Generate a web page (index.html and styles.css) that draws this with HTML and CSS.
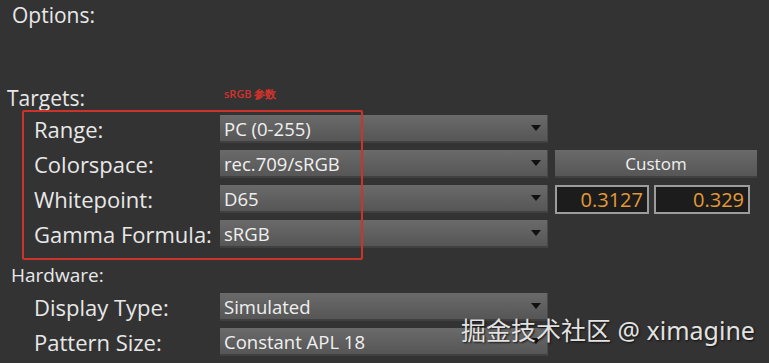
FILE: index.html
```html
<!DOCTYPE html>
<html>
<head>
<meta charset="utf-8">
<link rel="stylesheet" href="styles.css">
</head>
<body>
<div class="panel">
  <div class="title">Options:</div>
  <div class="section-head">
    <span class="section-title">Targets:</span>
    <span class="note">sRGB 参数</span>
  </div>
  <div class="group targets">
    <div class="row">
      <span class="label">Range:</span>
      <div class="select"><span>PC (0-255)</span><i class="caret"></i></div>
    </div>
    <div class="row">
      <span class="label">Colorspace:</span>
      <div class="select"><span>rec.709/sRGB</span><i class="caret"></i></div>
      <div class="button">Custom</div>
    </div>
    <div class="row">
      <span class="label">Whitepoint:</span>
      <div class="select"><span>D65</span><i class="caret"></i></div>
      <div class="inputs">
        <div class="field w1">0.3127</div>
        <div class="field w2">0.329</div>
      </div>
    </div>
    <div class="row">
      <span class="label">Gamma Formula:</span>
      <div class="select"><span>sRGB</span><i class="caret"></i></div>
    </div>
    <div class="highlight"></div>
  </div>
  <div class="section-head hw">
    <span class="section-title small">Hardware:</span>
  </div>
  <div class="group">
    <div class="row">
      <span class="label">Display Type:</span>
      <div class="select"><span>Simulated</span><i class="caret"></i></div>
    </div>
    <div class="row">
      <span class="label">Pattern Size:</span>
      <div class="select"><span>Constant APL 18</span><i class="caret"></i></div>
    </div>
  </div>
  <div class="watermark">掘金技术社区 @ ximagine</div>
</div>
</body>
</html>
```
FILE: styles.css
```css
html, body {
  margin: 0;
  padding: 0;
  background: #333333;
}
body {
  width: 769px;
  height: 363px;
  overflow: hidden;
  font-family: "Open Sans", "Noto Sans", sans-serif;
  color: #e8e8e8;
}
.panel {
  position: relative;
  height: 363px;
}
.title {
  font-size: 21px;
  line-height: 24px;
  padding: 3px 0 0 12px;
  height: 24px;
}
.section-head {
  display: flex;
  align-items: center;
  margin-top: 59px;
  padding-left: 7px;
  height: 24px;
}
.section-title {
  font-size: 21px;
  line-height: 24px;
  width: 215px;
}
.section-title.small {
  font-size: 19px;
}
.note {
  font-size: 11px;
  font-weight: 600;
  color: #d3322c;
  line-height: 12px;
  margin-top: -8px;
  padding-left: 2px;
}
.group {
  position: relative;
  display: flex;
  flex-direction: column;
  gap: 7px;
  padding-left: 34px;
}
.targets {
  margin-top: 5px;
}
.hw {
  margin-top: 15px;
  padding-left: 11px;
}
.hw + .group {
  margin-top: 6px;
}
.row {
  display: flex;
  align-items: center;
  height: 28px;
}
.label {
  width: 186px;
  font-size: 22px;
  line-height: 28px;
  white-space: nowrap;
}
.select {
  box-sizing: border-box;
  width: 328px;
  height: 28px;
  display: flex;
  align-items: center;
  justify-content: space-between;
  padding: 0 6px 0 4px;
  background: linear-gradient(#6a6a6a, #565656);
  border-bottom: 2px solid #404040;
  border-right: 1px solid #4a4a4a;
  font-size: 18.5px;
  color: #f0f0f0;
}
.caret {
  width: 0;
  height: 0;
  border-left: 5px solid transparent;
  border-right: 5px solid transparent;
  border-top: 6px solid #111;
}
.button {
  box-sizing: border-box;
  margin-left: 7px;
  width: 202px;
  height: 28px;
  display: flex;
  align-items: center;
  justify-content: center;
  background: linear-gradient(#6a6a6a, #565656);
  border-bottom: 2px solid #404040;
  font-size: 17px;
  color: #f0f0f0;
}
.inputs {
  display: flex;
  gap: 5px;
  margin-left: 7px;
}
.field {
  box-sizing: border-box;
  height: 29px;
  background: #1c1c1c;
  border: 2px solid #9c9c9c;
  color: #e39a36;
  font-size: 20px;
  line-height: 25px;
  text-align: right;
  padding-right: 4px;
}
.w1 { width: 94px; }
.w2 { width: 96px; }
.highlight {
  position: absolute;
  left: 22px;
  top: -5px;
  width: 341px;
  height: 150px;
  box-sizing: border-box;
  border: 2px solid #cc3329;
  border-radius: 2px;
  pointer-events: none;
}
.watermark {
  position: absolute;
  left: 461px;
  top: 311px;
  font-family: "Noto Sans", "Noto Sans CJK SC", sans-serif;
  font-size: 25px;
  color: #e2e2e2;
  text-shadow: 1px 1px 2px #111;
  white-space: nowrap;
}
```
